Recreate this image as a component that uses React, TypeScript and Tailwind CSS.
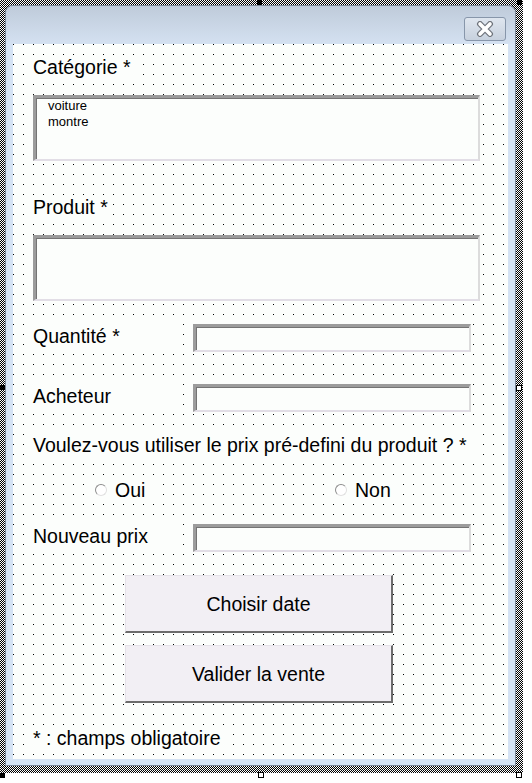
import React from 'react';

const formBg = 'bg-[#fcfefc]';
const labelCls = `${formBg} text-[19.5px] leading-[24px] text-black whitespace-nowrap`;

function SunkenBox({ className }: { className: string }) {
  return (
    <div
      className={`${formBg} ${className} border-t-[3px] border-l-[3px] border-r-2 border-b-2 border-t-[#9c9c9c] border-l-[#9c9c9c] border-r-[#dcdcdc] border-b-[#e2dee6] shadow-[inset_1px_1px_0_#747474]`}
    />
  );
}

function FieldRow({ label }: { label: string }) {
  return (
    <div className="flex items-start">
      <div className={`${labelCls} w-[150px] mr-[10px]`}>{label}</div>
      <SunkenBox className="w-[278px] h-[28px]" />
    </div>
  );
}

function Radio({ label }: { label: string }) {
  return (
    <div className={`${formBg} w-[72px] h-[24px] pl-[7px] flex items-center gap-[8px]`}>
      <span className="w-[12px] h-[12px] rounded-full bg-white border border-t-[#8c8c8c] border-l-[#8c8c8c] border-r-[#e0e0e0] border-b-[#e0e0e0]" />
      <span className="text-[19.5px] leading-[24px]">{label}</span>
    </div>
  );
}

function FormButton({ label, className }: { label: string; className: string }) {
  return (
    <div
      className={`${className} ml-[92px] w-[268px] h-[58px] flex items-center justify-center bg-[#f2eff4] border-t border-l border-r-2 border-b-2 border-t-[#e4e1e7] border-l-[#e4e1e7] border-r-[#6c6c6c] border-b-[#6c6c6c] text-[19.5px] leading-[24px]`}
    >
      {label}
    </div>
  );
}

function CloseGlyph() {
  return (
    <svg width="18" height="16" viewBox="0 0 18 16">
      <path d="M4 3 L14 13 M14 3 L4 13" stroke="#6f747c" strokeWidth="6" strokeLinecap="round" />
      <path d="M4 3 L14 13 M14 3 L4 13" stroke="#ffffff" strokeWidth="3.6" strokeLinecap="round" />
    </svg>
  );
}

export default function App() {
  return (
    <div className="w-[532px] h-[783px] bg-white font-['Liberation_Sans',Arial,sans-serif] text-black">
      <div className="relative w-[523px] h-[773px] pt-[5px] pl-[5px] pr-[7px] pb-[7px] bg-[repeating-conic-gradient(#000_0%_25%,#fff_0%_50%)] bg-[length:2px_2px]">
        {/* selection handles */}
        <div className="absolute left-[257px] top-0 w-[5px] h-[5px] bg-black" />
        <div className="absolute left-[517px] top-0 w-[5px] h-[5px] bg-black" />
        <div className="absolute left-0 top-[385px] w-[5px] h-[5px] bg-black" />
        <div className="absolute left-[516px] top-[385px] w-[6px] h-[6px] bg-white border border-black" />
        <div className="absolute left-0 top-[773px] w-[5px] h-[5px] bg-black" />
        <div className="absolute left-[258px] top-[772px] w-[6px] h-[6px] bg-white border border-black" />
        <div className="absolute left-[516px] top-[772px] w-[6px] h-[6px] bg-white border border-black" />

        <div className="w-full h-full flex flex-col border border-[#7c8899] rounded-t-[7px] overflow-hidden">
          {/* title bar */}
          <div className="h-[38px] shrink-0 flex justify-end items-start pt-[11px] pr-[9px] bg-gradient-to-b from-[#bfcbda] to-[#d4e1f1]">
            <div className="w-[42px] h-[24px] rounded-[3px] border border-[#8796aa] bg-gradient-to-b from-[#dfe6ef] to-[#c7d1de] flex items-center justify-center">
              <CloseGlyph />
            </div>
          </div>

          {/* client area */}
          <div className="flex-1 flex bg-[#d5e3f4] px-[7px] pb-[6px]">
            <div className="flex-1 flex flex-col items-start pl-[20px] pt-[11px] bg-[#fcfefc] bg-[conic-gradient(from_270deg_at_1px_1px,#000_90deg,transparent_0)] bg-[length:10px_10px]">
              <div className={`${labelCls} pr-[4px]`}>Catégorie *</div>

              <div className="mt-[16px] w-[447px] h-[66px] bg-[#fcfefc] border-t-[3px] border-l-[3px] border-r-2 border-b-2 border-t-[#9c9c9c] border-l-[#9c9c9c] border-r-[#dcdcdc] border-b-[#e2dee6] shadow-[inset_1px_1px_0_#747474] pl-[12px] text-[13px] leading-[16px]">
                <div>voiture</div>
                <div>montre</div>
              </div>

              <div className={`${labelCls} mt-[34px] pr-[4px]`}>Produit *</div>

              <SunkenBox className="mt-[16px] w-[447px] h-[66px]" />

              <div className="mt-[23px]">
                <FieldRow label="Quantité *" />
              </div>

              <div className="mt-[32px]">
                <FieldRow label="Acheteur" />
              </div>

              <div className={`${labelCls} mt-[21px] w-[447px]`}>
                Voulez-vous utiliser le prix pré-defini du produit ? *
              </div>

              <div className="mt-[21px] flex ml-[55px] gap-[168px]">
                <Radio label="Oui" />
                <Radio label="Non" />
              </div>

              <div className="mt-[22px]">
                <FieldRow label="Nouveau prix" />
              </div>

              <FormButton label="Choisir date" className="mt-[23px]" />
              <FormButton label="Valider la vente" className="mt-[12px]" />

              <div className={`${labelCls} mt-[23px] pr-[4px]`}>* : champs obligatoire</div>
            </div>
          </div>
        </div>
      </div>
    </div>
  );
}
